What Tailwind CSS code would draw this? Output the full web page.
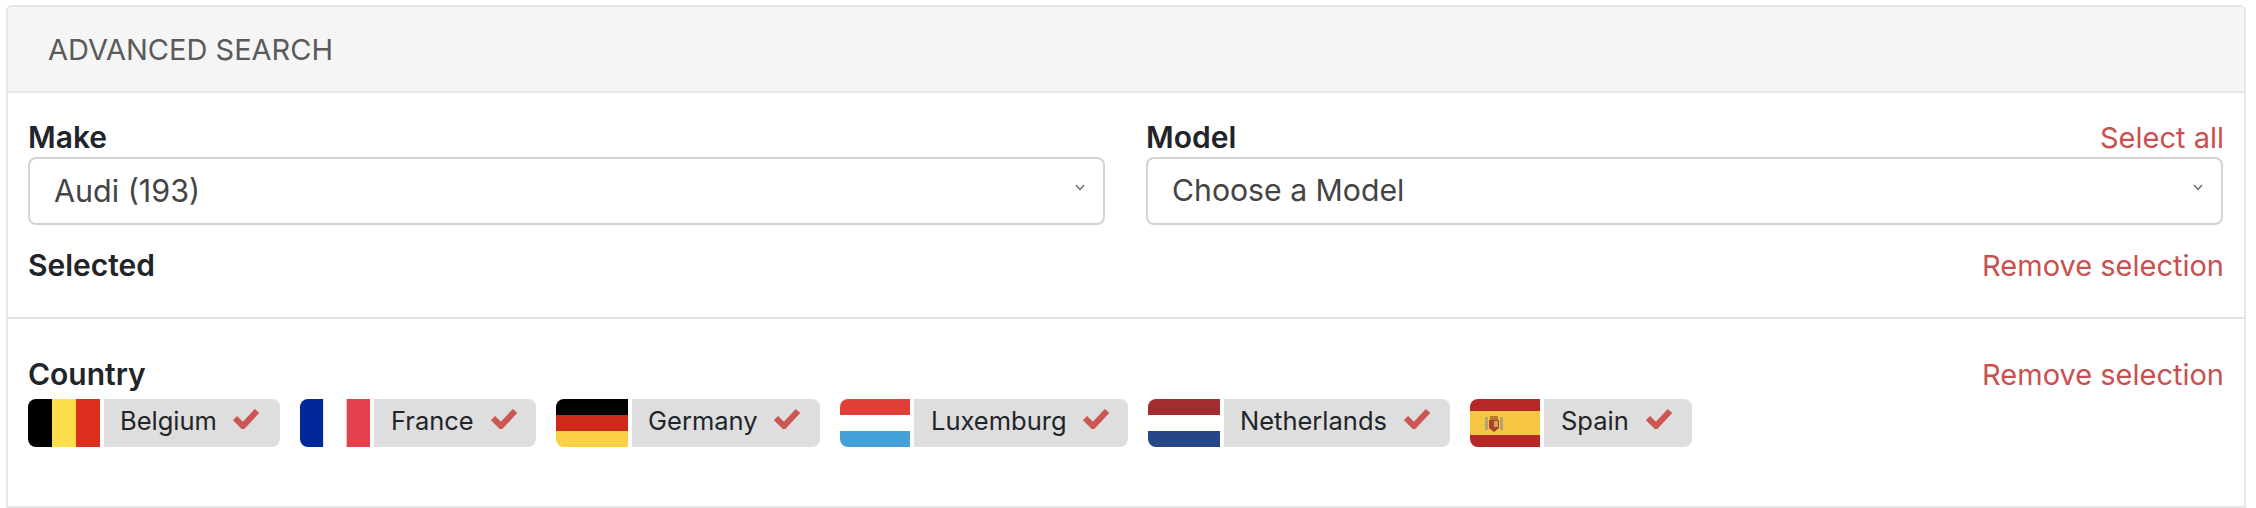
<!doctype html>
<html lang="en">
<head>
<meta charset="utf-8">
<title>Advanced search</title>
<script src="https://cdn.jsdelivr.net/npm/@tailwindcss/browser@4"></script>
</head>
<body class="bg-white font-['Inter',sans-serif] text-[#212529]">
<div class="pt-[5px] pl-[6px] pr-[10px] h-[508px] overflow-hidden">
  <section class="w-[2240px] h-[503px] border-2 border-[#e6e6e6] rounded-t-[6px]">
    <header class="h-[86px] bg-[#f5f5f5] border-b-2 border-[#e6e6e6] pl-[40px] flex items-center rounded-t-[6px]">
      <h2 class="text-[29px] leading-none text-[#5a5a5a] uppercase">Advanced search</h2>
    </header>
    <div class="px-[21px] h-[226px] border-b-2 border-[#e2e2e2]">
      <div class="grid grid-cols-2 gap-x-[42px] pt-[27px]">
        <div>
          <div class="h-[37px] flex items-center -ml-[1px] pb-[3px]"><label class="text-[30px] leading-none font-semibold">Make</label></div>
          <div class="relative -ml-[1px]">
            <select class="appearance-none w-full h-[68px] border-2 border-[#ced4da] rounded-[8px] bg-white pl-[24px] text-[30.5px] text-[#444]"><option>Audi (193)</option></select>
            <svg class="absolute right-[20px] top-[26px] w-[10px] h-[9px]" viewBox="0 0 10 9" fill="none" stroke="#666" stroke-width="1.3"><path d="M1 2l4 4.5L9 2"/></svg>
          </div>
        </div>
        <div>
          <div class="h-[37px] flex items-center justify-between -ml-[1px] pb-[3px]"><label class="text-[30px] leading-none font-semibold">Model</label><a class="text-[29px] leading-none text-[#c9504f] -mr-[1px]">Select all</a></div>
          <div class="relative -ml-[1px]">
            <select class="appearance-none w-full h-[68px] border-2 border-[#ced4da] rounded-[8px] bg-white pl-[24px] text-[30.2px] text-[#444]"><option>Choose a Model</option></select>
            <svg class="absolute right-[20px] top-[26px] w-[10px] h-[9px]" viewBox="0 0 10 9" fill="none" stroke="#666" stroke-width="1.3"><path d="M1 2l4 4.5L9 2"/></svg>
          </div>
        </div>
      </div>
      <div class="flex items-center justify-between h-[36px] mt-[22px] -ml-[1px]">
        <span class="text-[30px] leading-none font-semibold">Selected</span>
        <a class="text-[29px] leading-none text-[#c9504f] -mr-[1px]">Remove selection</a>
      </div>
    </div>
    <div class="px-[21px] pt-[37px]">
      <div class="flex items-center justify-between h-[36px] -ml-[1px]">
        <span class="text-[30px] leading-none font-semibold">Country</span>
        <a class="text-[29px] leading-none text-[#c9504f] -mr-[1px]">Remove selection</a>
      </div>
      <ul class="flex gap-x-[20px] mt-[7px] -ml-[1px]">
        <li class="flex items-stretch h-[48px] gap-x-[4px]">
          <svg class="w-[72px] h-[48px] rounded-l-[8px]" viewBox="0 0 3 3" preserveAspectRatio="none"><rect width="1" height="3" fill="#000"/><rect x="1" width="1" height="3" fill="#fbde4a"/><rect x="2" width="1" height="3" fill="#dc2f1f"/></svg>
          <span class="flex items-center w-[176px] pl-[16px] bg-[#dedede] rounded-r-[8px] text-[25.5px]"><span class="-mt-[3px]">Belgium</span><svg class="ml-auto mr-[21px] -mt-[8px] w-[26px] h-[20px]" viewBox="0 0 26 20" fill="none" stroke="#cb5652" stroke-width="6"><path d="M2 9l8 8L24 2"/></svg></span>
        </li>
        <li class="flex items-stretch h-[48px] gap-x-[4px]">
          <svg class="w-[70px] h-[48px] rounded-l-[8px]" viewBox="0 0 3 3" preserveAspectRatio="none"><rect width="1" height="3" fill="#00289c"/><rect x="1" width="1" height="3" fill="#fff"/><rect x="2" width="1" height="3" fill="#e2404a"/></svg>
          <span class="flex items-center w-[162px] pl-[17px] bg-[#dedede] rounded-r-[8px] text-[25.5px]"><span class="-mt-[3px]">France</span><svg class="ml-auto mr-[19px] -mt-[8px] w-[26px] h-[20px]" viewBox="0 0 26 20" fill="none" stroke="#cb5652" stroke-width="6"><path d="M2 9l8 8L24 2"/></svg></span>
        </li>
        <li class="flex items-stretch h-[48px] gap-x-[4px]">
          <svg class="w-[72px] h-[48px] rounded-l-[8px]" viewBox="0 0 3 3" preserveAspectRatio="none"><rect width="3" height="1" fill="#000"/><rect y="1" width="3" height="1" fill="#cf291a"/><rect y="2" width="3" height="1" fill="#fbd046"/></svg>
          <span class="flex items-center w-[188px] pl-[16px] bg-[#dedede] rounded-r-[8px] text-[25.5px]"><span class="-mt-[3px]">Germany</span><svg class="ml-auto mr-[20px] -mt-[8px] w-[26px] h-[20px]" viewBox="0 0 26 20" fill="none" stroke="#cb5652" stroke-width="6"><path d="M2 9l8 8L24 2"/></svg></span>
        </li>
        <li class="flex items-stretch h-[48px] gap-x-[4px]">
          <svg class="w-[70px] h-[48px] rounded-l-[8px]" viewBox="0 0 3 3" preserveAspectRatio="none"><rect width="3" height="1" fill="#e0403a"/><rect y="1" width="3" height="1" fill="#fff"/><rect y="2" width="3" height="1" fill="#44a0d8"/></svg>
          <span class="flex items-center w-[214px] pl-[17px] bg-[#dedede] rounded-r-[8px] text-[25.5px]"><span class="-mt-[3px]">Luxemburg</span><svg class="ml-auto mr-[19px] -mt-[8px] w-[26px] h-[20px]" viewBox="0 0 26 20" fill="none" stroke="#cb5652" stroke-width="6"><path d="M2 9l8 8L24 2"/></svg></span>
        </li>
        <li class="flex items-stretch h-[48px] gap-x-[4px]">
          <svg class="w-[72px] h-[48px] rounded-l-[8px]" viewBox="0 0 3 3" preserveAspectRatio="none"><rect width="3" height="1" fill="#a32c2e"/><rect y="1" width="3" height="1" fill="#fff"/><rect y="2" width="3" height="1" fill="#264785"/></svg>
          <span class="flex items-center w-[226px] pl-[16px] bg-[#dedede] rounded-r-[8px] text-[25.5px]"><span class="-mt-[3px]">Netherlands</span><svg class="ml-auto mr-[20px] -mt-[8px] w-[26px] h-[20px]" viewBox="0 0 26 20" fill="none" stroke="#cb5652" stroke-width="6"><path d="M2 9l8 8L24 2"/></svg></span>
        </li>
        <li class="flex items-stretch h-[48px] gap-x-[4px]">
          <svg class="w-[70px] h-[48px] rounded-l-[8px]" viewBox="0 0 70 48"><rect width="70" height="48" fill="#b52825"/><rect y="12" width="70" height="24" fill="#f6c543"/><rect x="15" y="18" width="3" height="13" fill="#b3a56c"/><rect x="30" y="18" width="3" height="13" fill="#b3a56c"/><path d="M19 21h10v8l-5 4-5-4z" fill="#a9432b"/><path d="M20 17h8v4h-8z" fill="#b9762f"/><rect x="24" y="22" width="4" height="6" fill="#d9a05b"/></svg>
          <span class="flex items-center w-[148px] pl-[17px] bg-[#dedede] rounded-r-[8px] text-[25.5px]"><span class="-mt-[3px]">Spain</span><svg class="ml-auto mr-[20px] -mt-[8px] w-[26px] h-[20px]" viewBox="0 0 26 20" fill="none" stroke="#cb5652" stroke-width="6"><path d="M2 9l8 8L24 2"/></svg></span>
        </li>
      </ul>
    </div>
  </section>
</div>
</body>
</html>
